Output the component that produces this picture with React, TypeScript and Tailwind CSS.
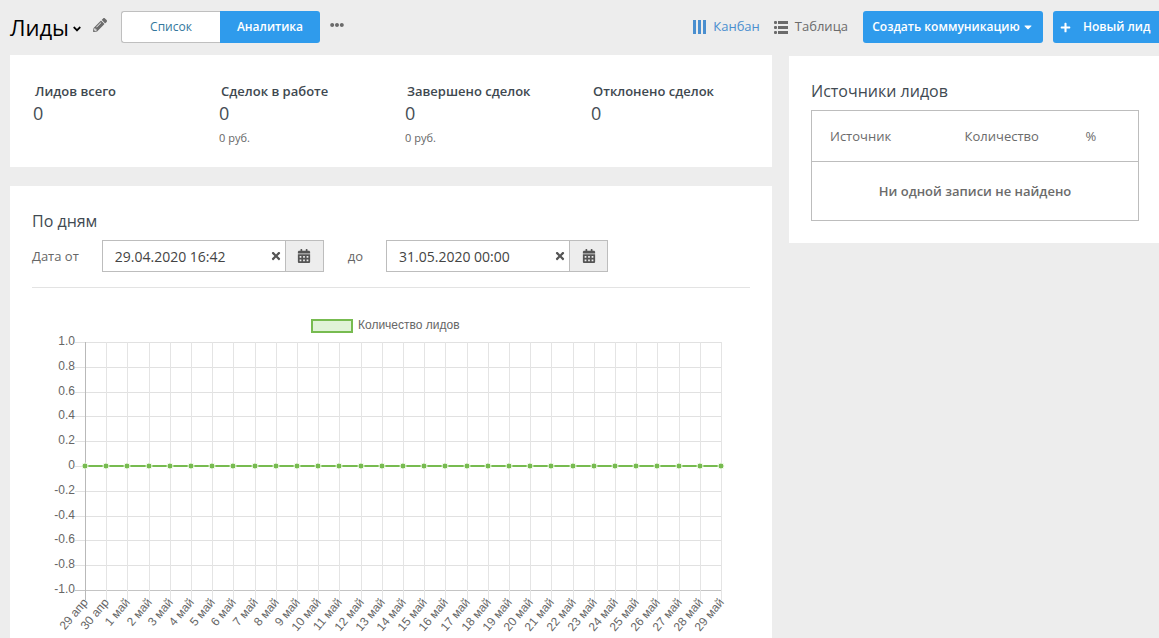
import { useState } from "react";
import {
  FaAngleDown,
  FaCalendarAlt,
  FaCaretDown,
  FaEllipsisH,
  FaPencilAlt,
  FaPlus,
  FaTimes,
} from "react-icons/fa";

const stats = [
  { title: "Лидов всего", count: 0, sum: "" },
  { title: "Сделок в работе", count: 0, sum: "0 руб." },
  { title: "Завершено сделок", count: 0, sum: "0 руб." },
  { title: "Отклонено сделок", count: 0, sum: "" },
];

const days = [
  "29 апр",
  "30 апр",
  ...Array.from({ length: 29 }, (_, i) => `${i + 1} май`),
];

const levels = [
  "1.0",
  "0.8",
  "0.6",
  "0.4",
  "0.2",
  "0",
  "-0.2",
  "-0.4",
  "-0.6",
  "-0.8",
  "-1.0",
];

const IconKanban = () => (
  <svg width="13" height="14" viewBox="0 0 13 14" fill="currentColor">
    <rect x="0" y="0" width="3" height="14" />
    <rect x="5" y="0" width="3" height="14" />
    <rect x="10" y="0" width="3" height="14" />
  </svg>
);

const IconTable = () => (
  <svg width="14" height="13" viewBox="0 0 14 13" fill="currentColor">
    {[0, 5, 10].map((y) => (
      <g key={y}>
        <rect x="0" y={y} width="3" height="3" rx="1" />
        <rect x="4" y={y} width="10" height="3" />
      </g>
    ))}
  </svg>
);

const Header = () => {
  return (
    <header className="flex h-[55px] items-center pb-px">
      <h1 className="flex items-center text-[22px] font-medium text-black">
        Лиды
        <button aria-label="Выбрать раздел" className="ml-0.5 mt-1">
          <FaAngleDown className="size-3" />
        </button>
      </h1>
      <button aria-label="Редактировать" className="ml-2.5 mb-1 text-[#6b6b6b]">
        <FaPencilAlt className="size-3.5" />
      </button>
      <div className="ml-3.5 flex h-8 text-xs">
        <button className="w-[99px] rounded-l-[3px] border border-r-0 border-[#bfbfbf] bg-white font-medium text-[#33779c]">
          Список
        </button>
        <button className="w-[100px] rounded-r-[3px] bg-[#2f9bec] font-semibold text-white">
          Аналитика
        </button>
      </div>
      <button aria-label="Ещё" className="ml-2.5 mb-1 text-[#6b6b6b]">
        <FaEllipsisH className="size-3.5" />
      </button>
      <nav className="ml-auto flex items-center text-[13px]">
        <a href="#kanban" className="flex items-center gap-[7px] text-[#4a8fcf]">
          <IconKanban />
          Канбан
        </a>
        <a href="#table" className="ml-3.5 flex items-center gap-[7px] text-[#6b6b6b]">
          <IconTable />
          Таблица
        </a>
      </nav>
      <button className="ml-[15px] flex h-8 w-[180px] items-center justify-center gap-0.5 rounded-[3px] bg-[#2f9bec] text-xs font-semibold text-white">
        Создать коммуникацию
        <FaCaretDown className="size-3" />
      </button>
      <button className="ml-2.5 flex h-8 w-[106px] items-center gap-3 rounded-l-[3px] bg-[#2f9bec] pl-[7px] text-xs font-semibold text-white">
        <FaPlus className="size-[11px]" />
        Новый лид
      </button>
    </header>
  );
};

const Stats = () => {
  return (
    <section className="grid h-28 grid-cols-4 bg-white px-[9px] pt-[26px]">
      {stats.map((item) => (
        <div key={item.title} className="pl-3.5">
          <h3 className="pl-0.5 text-[13px] leading-5 font-semibold text-[#3e4850]">
            {item.title}
          </h3>
          <p className="text-lg leading-6 text-[#454d54]">{item.count}</p>
          <p className="text-[11px] leading-[26px] text-[#666]">{item.sum}</p>
        </div>
      ))}
    </section>
  );
};

type DateFieldProps = {
  id: string;
  label: string;
  initial: string;
};

const DateField = ({ id, label, initial }: DateFieldProps) => {
  const [value, setValue] = useState(initial);
  return (
    <div className="flex items-center gap-[23px]">
      <label htmlFor={id} className="pt-0.5 text-[13px] text-[#666]">
        {label}
      </label>
      <div className="flex h-8 w-[222px] border border-[#bdbdbd] text-[#555]">
        <input
          id={id}
          value={value}
          onChange={(e) => setValue(e.target.value)}
          className="w-0 grow pt-0.5 pl-3 text-sm text-[#444] outline-none"
        />
        <button
          aria-label="Очистить"
          onClick={() => setValue("")}
          className="px-[3px]"
        >
          <FaTimes className="size-3" />
        </button>
        <button
          aria-label="Открыть календарь"
          className="flex w-[38px] items-center justify-center border-l border-[#bdbdbd] bg-[#ededed]"
        >
          <FaCalendarAlt className="size-3.5" />
        </button>
      </div>
    </div>
  );
};

const left = 53;
const right = 689;
const top = 36;
const bottom = 284;
const dayX = (i: number) =>
  Math.round(left + (i * (right - left)) / (days.length - 1)) + 0.5;
const levelY = (i: number) =>
  Math.round(top + (i * (bottom - top)) / (levels.length - 1)) + 0.5;

const Chart = () => {
  const zero = levelY(5) - 0.5;
  return (
    <svg
      viewBox="0 0 718 332"
      className="block w-full font-['Liberation_Sans',Arial,sans-serif] text-xs"
      role="img"
      aria-label="Количество лидов"
    >
      <rect x="280" y="14" width="40" height="12" fill="#e0f3d8" stroke="#77bb50" strokeWidth="2" />
      <text x="326" y="23" fill="#666">
        Количество лидов
      </text>
      {levels.map((level, i) => (
        <g key={level}>
          <line
            x1={left - 10}
            x2={right + 1}
            y1={levelY(i)}
            y2={levelY(i)}
            stroke={i === levels.length - 1 ? "#c4c4c4" : "#e1e1e1"}
          />
          <text x={left - 10} y={levelY(i) + 2.5} textAnchor="end" fill="#666">
            {level}
          </text>
        </g>
      ))}
      {days.map((day, i) => (
        <g key={day}>
          <line
            x1={dayX(i)}
            x2={dayX(i)}
            y1={top}
            y2={bottom + 10}
            stroke={i === 0 ? "#b9b9b9" : "#e4e4e4"}
          />
          <text
            textAnchor="end"
            fill="#666"
            transform={`translate(${dayX(i)} ${bottom + 10}) rotate(-50)`}
            dy="4"
          >
            {day}
          </text>
        </g>
      ))}
      <line x1={left} x2={right} y1={zero} y2={zero} stroke="#77bb50" strokeWidth="2" />
      {days.map((day, i) => (
        <circle
          key={day}
          cx={dayX(i) - 0.5}
          cy={zero}
          r="3"
          fill="#77bb50"
          stroke="#f1fbe9"
        />
      ))}
    </svg>
  );
};

const ByDays = () => {
  return (
    <section className="mt-[19px] bg-white px-[22px] pt-[21px]">
      <h2 className="text-base leading-7 text-[#414a52]">По дням</h2>
      <div className="mt-[5px] flex gap-6 border-b border-[#e3e3e3] pb-[15px]">
        <DateField id="date-from" label="Дата от" initial="29.04.2020 16:42" />
        <DateField id="date-to" label="до" initial="31.05.2020 00:00" />
      </div>
      <div className="pt-[18px]">
        <Chart />
      </div>
    </section>
  );
};

const Sources = () => {
  return (
    <section className="mt-px self-start bg-white pt-[21px] pr-5 pb-[22px] pl-[22px]">
      <h2 className="text-base leading-7 text-[#414a52]">Источники лидов</h2>
      <table className="mt-[5px] w-full border border-[#bdbdbd] text-[13px] text-[#6b6b6b]">
        <thead>
          <tr className="h-[51px] border-b border-[#bdbdbd] text-left">
            <th className="w-[41%] pt-0.5 pl-[18px] font-normal">Источник</th>
            <th className="w-[37%] pt-0.5 pl-[19px] font-normal">Количество</th>
            <th className="pt-0.5 pl-[19px] font-normal">%</th>
          </tr>
        </thead>
        <tbody>
          <tr className="h-[59px]">
            <td colSpan={3} className="pt-0.5 text-center font-semibold">
              Ни одной записи не найдено
            </td>
          </tr>
        </tbody>
      </table>
    </section>
  );
};

const App = () => {
  return (
    <div className="min-h-screen bg-[#ededed] pl-2.5 font-['Open_Sans',sans-serif]">
      <Header />
      <main className="grid grid-cols-[762fr_370fr] gap-x-[17px]">
        <div>
          <Stats />
          <ByDays />
        </div>
        <Sources />
      </main>
    </div>
  );
};

export default App;
